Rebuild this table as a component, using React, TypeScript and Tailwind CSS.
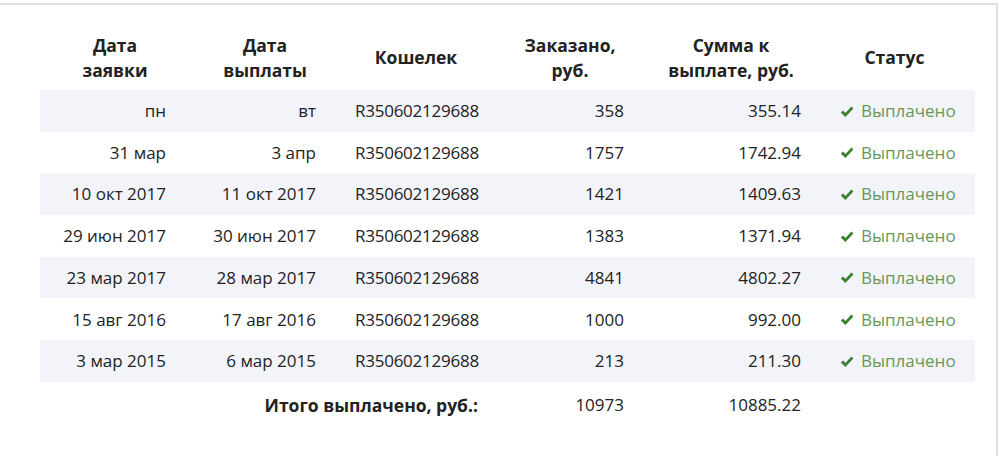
import React from 'react';

type Row = {
  created: string;
  paid: string;
  wallet: string;
  ordered: string;
  amount: string;
};

const rows: Row[] = [
  { created: 'пн', paid: 'вт', wallet: 'R350602129688', ordered: '358', amount: '355.14' },
  { created: '31 мар', paid: '3 апр', wallet: 'R350602129688', ordered: '1757', amount: '1742.94' },
  { created: '10 окт 2017', paid: '11 окт 2017', wallet: 'R350602129688', ordered: '1421', amount: '1409.63' },
  { created: '29 июн 2017', paid: '30 июн 2017', wallet: 'R350602129688', ordered: '1383', amount: '1371.94' },
  { created: '23 мар 2017', paid: '28 мар 2017', wallet: 'R350602129688', ordered: '4841', amount: '4802.27' },
  { created: '15 авг 2016', paid: '17 авг 2016', wallet: 'R350602129688', ordered: '1000', amount: '992.00' },
  { created: '3 мар 2015', paid: '6 мар 2015', wallet: 'R350602129688', ordered: '213', amount: '211.30' },
];

const CheckIcon = () => (
  <svg width="14" height="12" viewBox="0 0 14 12" className="inline-block mr-[7px] -mt-[2px]">
    <path d="M0.8 6.6 L3.2 4.4 L5.4 7 L11.4 0.6 L13.4 2.4 L5.4 11 Z" fill="#3b7f30" />
  </svg>
);

export default function App() {
  return (
    <div className="w-[1000px] h-[456px] bg-white pt-[3px] overflow-hidden" style={{ fontFamily: '"Open Sans", "Liberation Sans", sans-serif' }}>
      <div className="w-[998px] h-[460px] border-t-2 border-r-2 border-[#e0e0e0] pl-[40px] pt-[20px]">
        <table className="table-fixed border-collapse w-[935px] text-[17px] text-[#222]">
          <colgroup>
            <col className="w-[150px]" />
            <col className="w-[150px]" />
            <col className="w-[152px]" />
            <col className="w-[156px]" />
            <col className="w-[166px]" />
            <col className="w-[161px]" />
          </colgroup>
          <thead>
            <tr className="h-[65px] text-[17.5px] leading-[25px]">
              <th className="text-center font-bold">Дата<br />заявки</th>
              <th className="text-center font-bold">Дата<br />выплаты</th>
              <th className="text-center font-bold">Кошелек</th>
              <th className="text-center font-bold">Заказано,<br />руб.</th>
              <th className="text-center font-bold">Сумма к<br />выплате, руб.</th>
              <th className="text-center font-bold">Статус</th>
            </tr>
          </thead>
          <tbody>
            {rows.map((r, i) => (
              <tr key={i} className={i % 2 === 0 ? 'h-[41.7px] bg-[#f3f4f9]' : 'h-[41.7px] bg-white'}>
                <td className="text-right pr-6">{r.created}</td>
                <td className="text-right pr-6">{r.paid}</td>
                <td className="text-left pl-[15px] tracking-[-0.25px]">{r.wallet}</td>
                <td className="text-right pr-6">{r.ordered}</td>
                <td className="text-right pr-[13px]">{r.amount}</td>
                <td className="text-left pl-[26px] text-[#66985a] whitespace-nowrap">
                  <CheckIcon />
                  Выплачено
                </td>
              </tr>
            ))}
            <tr className="h-[46px]">
              <td colSpan={3} className="text-right pr-[14px] font-bold text-[17.5px]">Итого выплачено, руб.:</td>
              <td className="text-right pr-6">10973</td>
              <td className="text-right pr-[13px]">10885.22</td>
              <td />
            </tr>
          </tbody>
        </table>
      </div>
    </div>
  );
}
